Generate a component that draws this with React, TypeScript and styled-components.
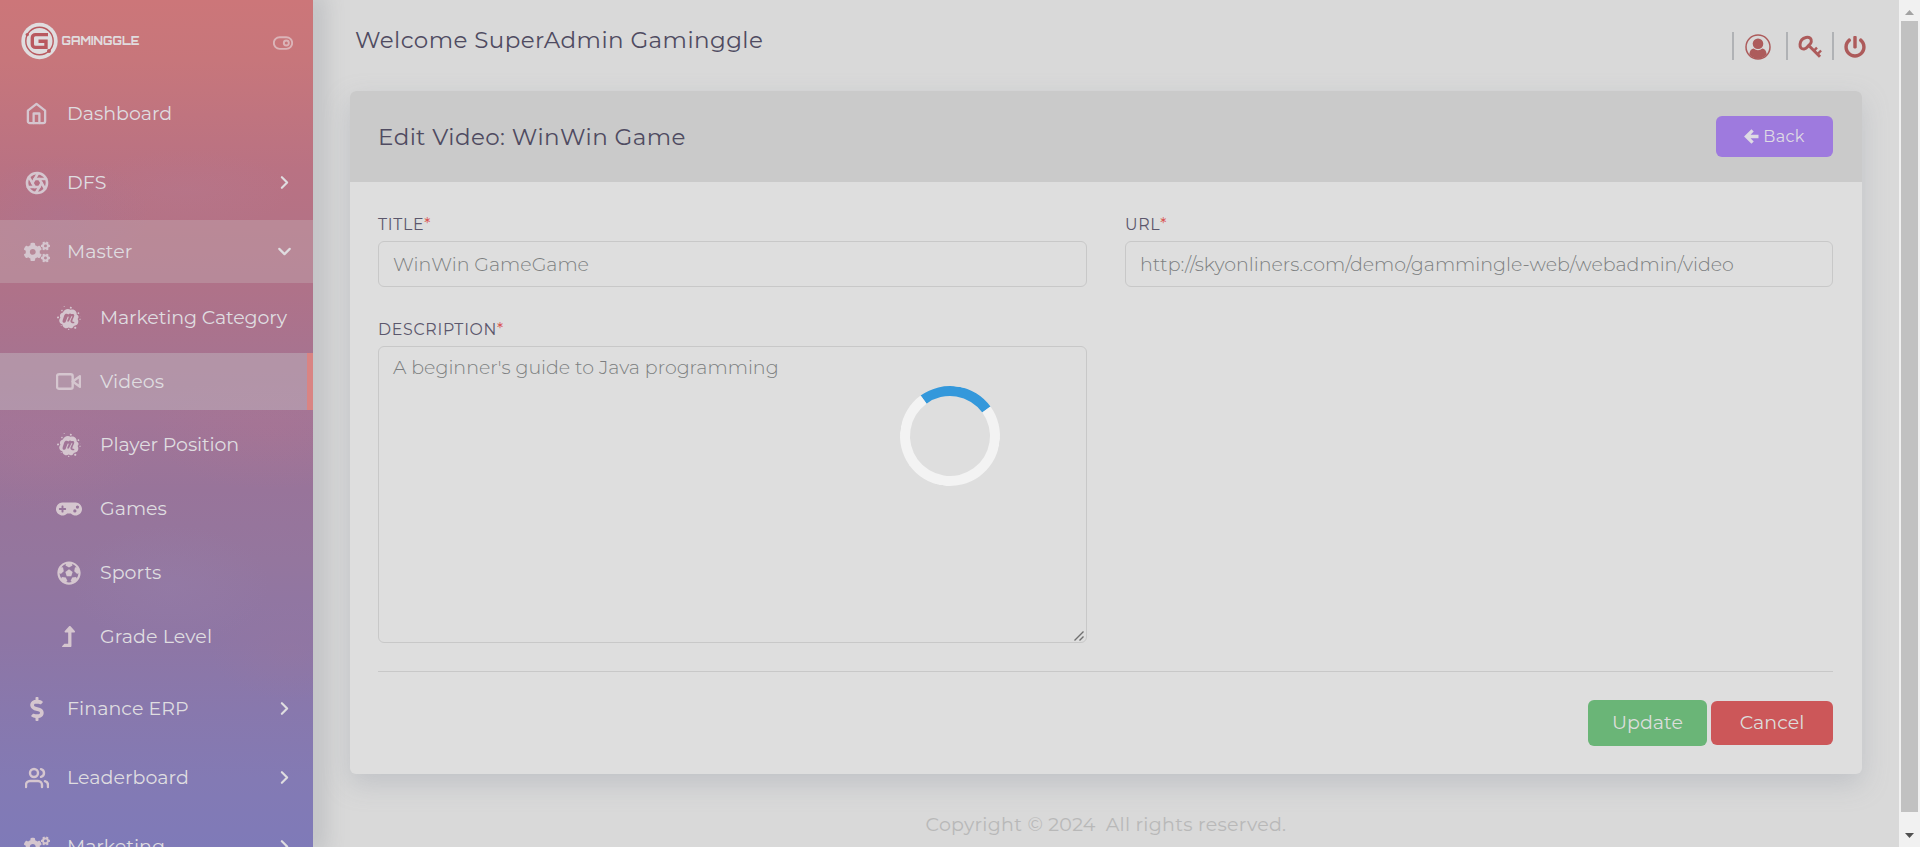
import React from "react";
import styled, { createGlobalStyle } from "styled-components";
import { FiHome, FiAperture, FiVideo, FiUsers, FiToggleRight, FiChevronRight, FiChevronDown } from "react-icons/fi";
import { FaCogs, FaMeetup, FaGamepad, FaFutbol, FaLevelUpAlt, FaDollarSign, FaPowerOff } from "react-icons/fa";

const GlobalStyle = createGlobalStyle`
  *, *::before, *::after { box-sizing: border-box; }
  html, body { margin: 0; padding: 0; overflow: hidden; }
  body {
    background: #d9d9d9;
    color: #4f4b61;
    font-family: Montserrat, Inter, "Liberation Sans", sans-serif;
    font-size: 19px;
  }
  button, input, textarea { font: inherit; margin: 0; }
`;

const Page = styled.div`
  display: flex;
  height: 847px;
  overflow: hidden;
`;

/* Sidebar */

const Sidebar = styled.aside`
  position: relative;
  z-index: 1;
  flex: 0 0 313px;
  height: 847px;
  overflow: hidden;
  background:
    radial-gradient(ellipse 90px 60px at 60px 215px, rgba(140, 125, 185, 0.12), transparent),
    radial-gradient(ellipse 110px 40px at 185px 190px, rgba(180, 125, 150, 0.22), transparent),
    radial-gradient(ellipse 120px 60px at 270px 430px, rgba(180, 115, 140, 0.2), transparent),
    radial-gradient(ellipse 110px 60px at 40px 455px, rgba(175, 120, 150, 0.25), transparent),
    radial-gradient(ellipse 100px 60px at 170px 585px, rgba(150, 128, 172, 0.35), transparent),
    radial-gradient(ellipse 80px 50px at 290px 650px, rgba(150, 118, 158, 0.35), transparent),
    linear-gradient(180deg, #cc7679 0, #c7767b 60px, #c0747f 115px, #b97283 170px, #b57285 215px, #af7289 290px,
      #a8738f 350px, #a27597 420px, #98749a 490px, #94769e 560px, #8e76a5 640px, #8878ad 710px,
      #837ab4 780px, #7f7ab8 847px);
`;

const SidebarShadow = styled.div`
  flex: 0 0 0;
  height: 847px;
  box-shadow: 0 0 24px 8px rgba(140, 144, 152, 0.5);
`;

const Brand = styled.div`
  display: flex;
  align-items: center;
  justify-content: space-between;
  height: 82px;
  padding: 0 20px 0 21px;
  color: #dbb4b8;
  svg:last-child { margin-top: 4px; }
`;

const NavRow = styled.div<{ $active?: boolean }>`
  display: flex;
  align-items: center;
  height: 63px;
  margin-bottom: ${(p) => (p.$active ? 0 : 6)}px;
  padding: 0 18px 0 19px;
  background: ${(p) => (p.$active ? "rgba(198, 178, 182, 0.36)" : "transparent")};
  color: #dfdde0;
`;

const SubNav = styled.div`
  padding: 6px 0 5px;
`;

const SubRow = styled.div<{ $active?: boolean }>`
  display: flex;
  align-items: center;
  height: 57px;
  margin-bottom: ${(p) => (p.$active ? 6 : 7)}px;
  padding-left: 51px;
  background: ${(p) => (p.$active ? "rgba(196, 188, 196, 0.45)" : "transparent")};
  border-right: 6px solid ${(p) => (p.$active ? "#d98483" : "transparent")};
  color: #dfdde0;
`;

const IconBox = styled.span`
  display: flex;
  align-items: center;
  justify-content: center;
  flex: 0 0 35px;
  color: #d5c6cf;
`;

const NavText = styled.span<{ $spacing: number; $indent?: number }>`
  flex: 1;
  padding-left: ${(p) => p.$indent ?? 13}px;
  line-height: 24px;
  letter-spacing: ${(p) => p.$spacing}px;
  white-space: nowrap;
`;

/* Main column */

const Main = styled.main`
  flex: 1;
  display: flex;
  flex-direction: column;
  padding: 0 37px 0 37px;
`;

const TopBar = styled.header`
  display: flex;
  justify-content: space-between;
  height: 91px;
  padding: 25px 0 0 5px;
`;

const Heading = styled.h1`
  margin: 0;
  font-size: 23px;
  font-weight: 400;
  line-height: 30px;
  letter-spacing: 0.42px;
  color: #4f4b61;
`;

const Tools = styled.div`
  display: flex;
  align-items: center;
  height: 42px;
  color: #ad5b5b;
`;

const Divider = styled.span`
  width: 2px;
  height: 28px;
  background: #b0b2b5;
`;

const Tool = styled.span<{ $left: number; $right: number }>`
  display: flex;
  margin: 1px ${(p) => p.$right}px 0 ${(p) => p.$left}px;
`;

const Card = styled.section`
  border-radius: 6px;
  background: #dedede;
  box-shadow: 0 10px 26px rgba(150, 156, 166, 0.36);
`;

const CardHeader = styled.div`
  display: flex;
  align-items: center;
  justify-content: space-between;
  height: 91px;
  padding: 0 29px 0 28px;
  border-radius: 6px 6px 0 0;
  background: #cacaca;
`;

const BackButton = styled.button`
  display: flex;
  align-items: center;
  justify-content: center;
  gap: 4px;
  width: 117px;
  height: 41px;
  padding: 0;
  border: 0;
  border-radius: 6px;
  background: #9e7ade;
  color: #dedbe4;
  font-size: 16px;
  letter-spacing: 0.4px;
`;

const CardBody = styled.div`
  padding: 26px 29px 28px 28px;
`;

const Fields = styled.div`
  display: grid;
  grid-template-columns: 709px 708px;
  gap: 26px 38px;
`;

const Field = styled.div`
  display: flex;
  flex-direction: column;
`;

const Label = styled.label`
  height: 33px;
  line-height: 33px;
  font-size: 15.8px;
  letter-spacing: 0.7px;
  color: #5b576c;
`;

const Star = styled.span`
  color: #d9534f;
  letter-spacing: 0;
`;

const Input = styled.input`
  height: 46px;
  padding: 0 14px;
  border: 1px solid #c8c8c8;
  border-radius: 6px;
  outline: 0;
  background: transparent;
  color: #7c7e80;
  font-weight: 300;
`;

const TextArea = styled.textarea`
  display: block;
  height: 297px;
  padding: 9px 14px;
  border: 1px solid #c8c8c8;
  border-radius: 6px;
  outline: 0;
  background: transparent;
  color: #7c7e80;
  font-weight: 300;
  line-height: 24px;
  resize: none;
`;

const TextAreaFrame = styled.div`
  position: relative;
  display: grid;
  color: #6f6f6f;
`;

const Grip = styled.svg`
  position: absolute;
  right: 3px;
  bottom: 2px;
`;

const Rule = styled.hr`
  height: 1px;
  margin: 28px 0;
  border: 0;
  background: #c8c8c8;
`;

const Actions = styled.div`
  display: flex;
  align-items: center;
  justify-content: flex-end;
  gap: 4px;
`;

const ActionButton = styled.button<{ $color: string; $w: number; $h: number }>`
  width: ${(p) => p.$w}px;
  height: ${(p) => p.$h}px;
  padding: 0 0 2px;
  border: 0;
  border-radius: 6px;
  background: ${(p) => p.$color};
  color: #dcdedc;
`;

const Footer = styled.footer`
  display: flex;
  justify-content: center;
  gap: 10px;
  padding-top: 39px;
  line-height: 24px;
  letter-spacing: 0.28px;
  color: #b8b8b8;
`;

/* Scrollbar */

const Scrollbar = styled.div`
  flex: 0 0 21px;
  display: flex;
  flex-direction: column;
  align-items: center;
  background: #f1f1f1;
`;

const ScrollArrow = styled.span<{ $h: number; $down?: boolean }>`
  display: flex;
  align-items: center;
  justify-content: center;
  height: ${(p) => p.$h}px;
  padding-top: ${(p) => (p.$down ? 12 : 3)}px;
  color: ${(p) => (p.$down ? "#505050" : "#a3a3a3")};
`;

const ScrollThumb = styled.span`
  width: 17px;
  height: 791px;
  background: #c1c1c1;
`;

/* Loading ring */

const Spinner = styled.div`
  position: absolute;
  z-index: 5;
  left: 900px;
  top: 386px;
  width: 100px;
  height: 100px;
  border: 10px solid #f3f3f3;
  border-top-color: #3498db;
  border-radius: 50%;
  transform: rotate(9deg);
`;

const Logo = () => (
  <svg width="122" height="38" viewBox="0 0 122 38" fill="none">
    <circle cx="18.5" cy="19" r="18.2" fill="#e0dddf" />
    <circle cx="18.5" cy="19" r="13.7" stroke="#b9595f" strokeWidth="1.4" />
    <circle cx="6.3" cy="12.6" r="1.7" fill="#b9595f" />
    <circle cx="28" cy="29" r="2" fill="#b9595f" />
    <path
      d="M27 12.6H14.5a3.2 3.2 0 0 0-3.2 3.2v6.4a3.2 3.2 0 0 0 3.2 3.2H25v-6.2h-7.5"
      stroke="#b9595f"
      strokeWidth="3.4"
    />
    <text
      x="40.5"
      y="23"
      fill="#e0dcde"
      fontSize="12"
      fontWeight="800"
      fontFamily="Orbitron, Montserrat, Inter, sans-serif"
      textLength="78"
      lengthAdjust="spacingAndGlyphs"
    >
      GAMINGGLE
    </text>
  </svg>
);

const UserIcon = () => (
  <svg width="26" height="26" viewBox="0 0 26 26" fill="none">
    <circle cx="13" cy="13" r="12" stroke="currentColor" strokeWidth="1.5" />
    <circle cx="13" cy="9.8" r="5.3" fill="currentColor" />
    <path
      d="M4.3 20.2C4.8 16.7 6.4 14.8 8.7 14.6a6.6 6.6 0 0 0 8.6 0c2.3.2 3.9 2.1 4.4 5.6A11.6 11.6 0 0 1 13 24.8a11.6 11.6 0 0 1-8.7-4.6z"
      fill="currentColor"
    />
  </svg>
);

const KeyIcon = () => (
  <svg width="25" height="24" viewBox="0 0 25 24" fill="none" stroke="currentColor">
    <path
      d="M3.8 4.8C5.8 2.4 10 1.4 12.200 3.200c2 1.900 1.200 5.200-1 6.800-1 .7-1.400 1.200-2 2.200-1.400 2-4.600 2.400-6.200.8S1.800 7.200 3.800 4.800z"
      strokeWidth="3"
    />
    <path d="M11.500 11.200L22 21.700" strokeWidth="3" />
    <path d="M16 15.600l3-3M19.500 19.100l3.600-3.600" strokeWidth="2.400" />
  </svg>
);

const BackArrow = () => (
  <svg width="15" height="15" viewBox="0 0 15 15" fill="none" stroke="currentColor">
    <path d="M8.6 1.3L2.4 7.5l6.2 6.2M2.8 7.5H14.5" strokeWidth="3.3" />
  </svg>
);

const Triangle = ({ down }: { down?: boolean }) => (
  <svg width="9" height="5" viewBox="0 0 9 5">
    <path d={down ? "M0 0h9L4.5 5z" : "M0 5h9L4.5 0z"} fill="currentColor" />
  </svg>
);

type Item = { label: string; spacing: number; icon: React.ReactNode; open?: boolean; leaf?: boolean };

const topItems: Item[] = [
  { label: "Dashboard", spacing: 0, icon: <FiHome size={23} strokeWidth={2.4} />, leaf: true },
  { label: "DFS", spacing: 0, icon: <FiAperture size={24} strokeWidth={2.6} /> },
];

const subItems: Item[] = [
  { label: "Marketing Category", spacing: -0.12, icon: <FaMeetup size={24} /> },
  { label: "Videos", spacing: 0.1, icon: <FiVideo size={25} strokeWidth={2.3} /> },
  { label: "Player Position", spacing: -0.12, icon: <FaMeetup size={24} /> },
  { label: "Games", spacing: 0, icon: <FaGamepad size={26} /> },
  { label: "Sports", spacing: 0, icon: <FaFutbol size={24} /> },
  { label: "Grade Level", spacing: 0.1, icon: <FaLevelUpAlt size={21} /> },
];

const bottomItems: Item[] = [
  { label: "Finance ERP", spacing: 0.06, icon: <FaDollarSign size={24} /> },
  { label: "Leaderboard", spacing: 0.04, icon: <FiUsers size={24} strokeWidth={2.4} /> },
  { label: "Marketing", spacing: 0, icon: <FaCogs size={26} /> },
];

const NavItem = ({ item }: { item: Item }) => (
  <NavRow $active={item.open}>
    <IconBox>{item.icon}</IconBox>
    <NavText $spacing={item.spacing}>{item.label}</NavText>
    {!item.leaf && (item.open ? <FiChevronDown size={21} strokeWidth={2.5} /> : <FiChevronRight size={21} strokeWidth={2.5} />)}
  </NavRow>
);

export default function App() {
  return (
    <>
      <GlobalStyle />
      <Page>
        <Sidebar>
          <Brand>
            <Logo />
            <FiToggleRight size={20} strokeWidth={2.3} />
          </Brand>
          {topItems.map((item) => (
            <NavItem key={item.label} item={item} />
          ))}
          <NavItem item={{ label: "Master", spacing: 0.05, icon: <FaCogs size={26} />, open: true }} />
          <SubNav>
            {subItems.map((item) => (
              <SubRow key={item.label} $active={item.label === "Videos"}>
                <IconBox>{item.icon}</IconBox>
                <NavText $spacing={item.spacing} $indent={14}>
                  {item.label}
                </NavText>
              </SubRow>
            ))}
          </SubNav>
          {bottomItems.map((item) => (
            <NavItem key={item.label} item={item} />
          ))}
        </Sidebar>
        <SidebarShadow />
        <Main>
          <TopBar>
            <Heading>Welcome SuperAdmin Gaminggle</Heading>
            <Tools>
              <Divider />
              <Tool $left={11} $right={15}>
                <UserIcon />
              </Tool>
              <Divider />
              <Tool $left={10} $right={9}>
                <KeyIcon />
              </Tool>
              <Divider />
              <Tool $left={10} $right={-4}>
                <FaPowerOff size={22} />
              </Tool>
            </Tools>
          </TopBar>
          <Card>
            <CardHeader>
              <Heading as="h2">Edit Video: WinWin Game</Heading>
              <BackButton>
                <BackArrow />
                Back
              </BackButton>
            </CardHeader>
            <CardBody>
              <Fields>
                <Field>
                  <Label>
                    TITLE<Star>*</Star>
                  </Label>
                  <Input defaultValue="WinWin GameGame" />
                </Field>
                <Field>
                  <Label>
                    URL<Star>*</Star>
                  </Label>
                  <Input defaultValue="http://skyonliners.com/demo/gammingle-web/webadmin/video" />
                </Field>
                <Field>
                  <Label>
                    DESCRIPTION<Star>*</Star>
                  </Label>
                  <TextAreaFrame>
                    <TextArea defaultValue="A beginner's guide to Java programming" />
                    <Grip width="10" height="10" viewBox="0 0 10 10" fill="none">
                      <path d="M0.5 9.5L9.5 0.5M5.5 9.5L9.5 5.5" stroke="currentColor" strokeWidth="1.4" />
                    </Grip>
                  </TextAreaFrame>
                </Field>
              </Fields>
              <Rule />
              <Actions>
                <ActionButton $color="#6ab577" $w={119} $h={46}>
                  Update
                </ActionButton>
                <ActionButton $color="#cc5759" $w={122} $h={44}>
                  Cancel
                </ActionButton>
              </Actions>
            </CardBody>
          </Card>
          <Footer>
            <span>Copyright © 2024</span>
            <span>All rights reserved.</span>
          </Footer>
        </Main>
        <Scrollbar>
          <ScrollArrow $h={21}>
            <Triangle />
          </ScrollArrow>
          <ScrollThumb />
          <ScrollArrow $h={35} $down>
            <Triangle down />
          </ScrollArrow>
        </Scrollbar>
        <Spinner />
      </Page>
    </>
  );
}
